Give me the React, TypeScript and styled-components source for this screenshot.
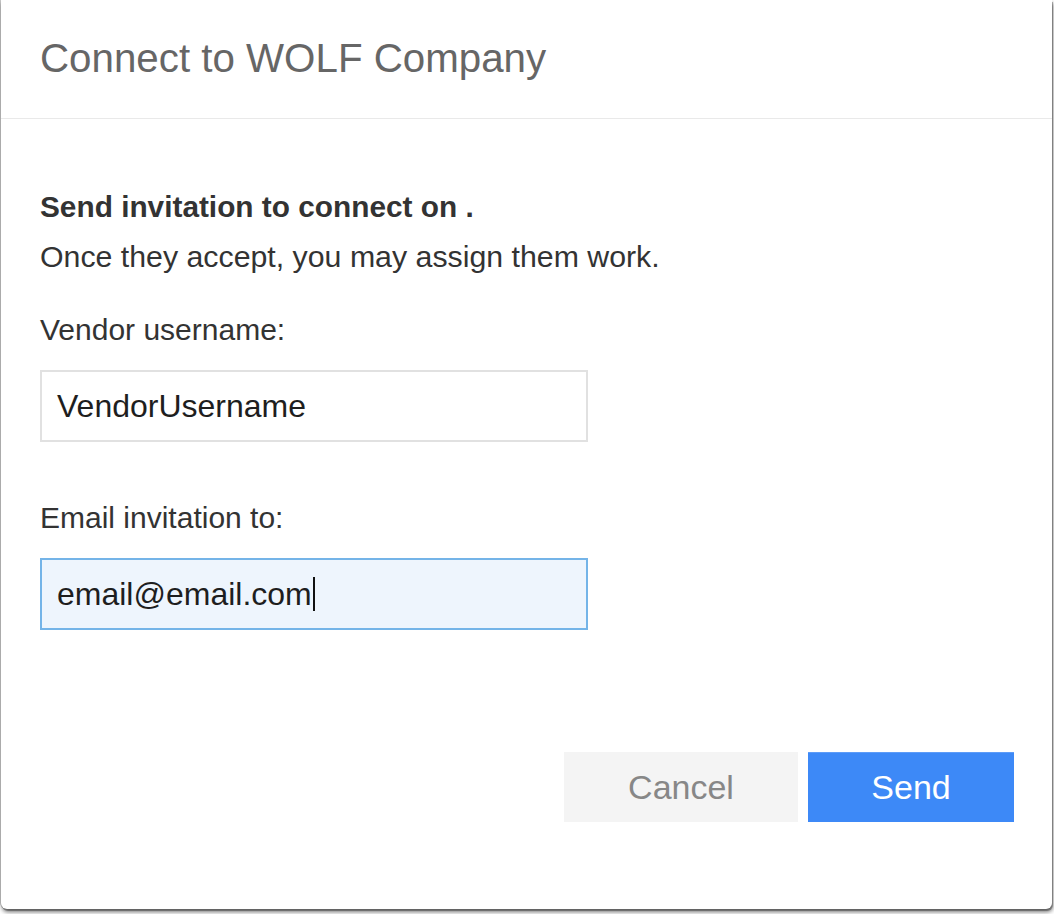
import React from 'react';
import styled, { createGlobalStyle } from 'styled-components';

const GlobalStyle = createGlobalStyle`
    html, body {
        margin: 0;
        padding: 0;
        background: #ffffff;
    }
    body {
        min-height: 914px;
        font-family: 'Liberation Sans', Arial, Helvetica, sans-serif;
        -webkit-font-smoothing: antialiased;
    }
`;

const Page = styled.div`
    height: 914px;
    overflow: hidden;
`;

const Dialog = styled.div`
    box-sizing: border-box;
    width: 1051px;
    height: 909px;
    margin-left: 1px;
    background: #ffffff;
    border-radius: 0 0 6px 6px;
    box-shadow: -1px 0 0 rgba(0, 0, 0, 0.22), 1px 2px 0 rgba(0, 0, 0, 0.25), 1px 3px 4px rgba(0, 0, 0, 0.55);
    display: flex;
    flex-direction: column;
`;

const Header = styled.div`
    height: 118px;
    display: flex;
    align-items: center;
    padding: 0 39px;
    border-bottom: 1px solid #e9e9e9;
`;

const Title = styled.h1`
    margin: 0;
    font-size: 40.3px;
    font-weight: 400;
    color: #666666;
`;

const Body = styled.div`
    padding: 63px 39px 0;
    display: flex;
    flex-direction: column;
`;

const Lead = styled.p<{ bold?: boolean }>`
    margin: 0;
    font-size: ${({ bold }) => (bold ? 29.8 : 30.3)}px;
    line-height: 50px;
    color: #333333;
    font-weight: ${({ bold }) => (bold ? 700 : 400)};
`;

const Field = styled.label<{ gapTop: number }>`
    display: flex;
    flex-direction: column;
    gap: 15px;
    margin-top: ${({ gapTop }) => gapTop}px;
`;

const LabelText = styled.span`
    font-size: 30px;
    line-height: 50px;
    color: #333333;
`;

const Input = styled.div<{ focused?: boolean }>`
    box-sizing: border-box;
    width: 548px;
    height: 72px;
    padding: 0 15px;
    display: flex;
    align-items: center;
    font-size: 32px;
    color: #1e1e1e;
    border: 2px solid ${({ focused }) => (focused ? '#74b4e8' : '#e1e1e1')};
    background: ${({ focused }) => (focused ? '#eef5fd' : '#ffffff')};
`;

const Caret = styled.span`
    display: inline-block;
    width: 2px;
    height: 34px;
    margin-left: 1px;
    background: #111111;
`;

const Footer = styled.div`
    margin-top: auto;
    padding: 0 38px 87px 0;
    display: flex;
    justify-content: flex-end;
    gap: 10px;
`;

const Button = styled.button<{ primary?: boolean }>`
    height: 70px;
    width: ${({ primary }) => (primary ? 206 : 234)}px;
    border: none;
    border-top: 1px solid ${({ primary }) => (primary ? '#5d9cf8' : '#f4f4f4')};
    font-family: 'Liberation Sans', Arial, Helvetica, sans-serif;
    font-size: 34px;
    color: ${({ primary }) => (primary ? '#ffffff' : '#878787')};
    background: ${({ primary }) => (primary ? '#3d89f7' : '#f4f4f4')};
    cursor: pointer;
`;

export default function App() {
    return (
        <Page>
            <GlobalStyle />
            <Dialog>
                <Header>
                    <Title>Connect to WOLF Company</Title>
                </Header>
                <Body>
                    <Lead bold>Send invitation to connect on .</Lead>
                    <Lead>Once they accept, you may assign them work.</Lead>
                    <Field gapTop={23}>
                        <LabelText>Vendor username:</LabelText>
                        <Input>VendorUsername</Input>
                    </Field>
                    <Field gapTop={51}>
                        <LabelText>Email invitation to:</LabelText>
                        <Input focused>
                            email@email.com
                            <Caret />
                        </Input>
                    </Field>
                </Body>
                <Footer>
                    <Button>Cancel</Button>
                    <Button primary>Send</Button>
                </Footer>
            </Dialog>
        </Page>
    );
}
